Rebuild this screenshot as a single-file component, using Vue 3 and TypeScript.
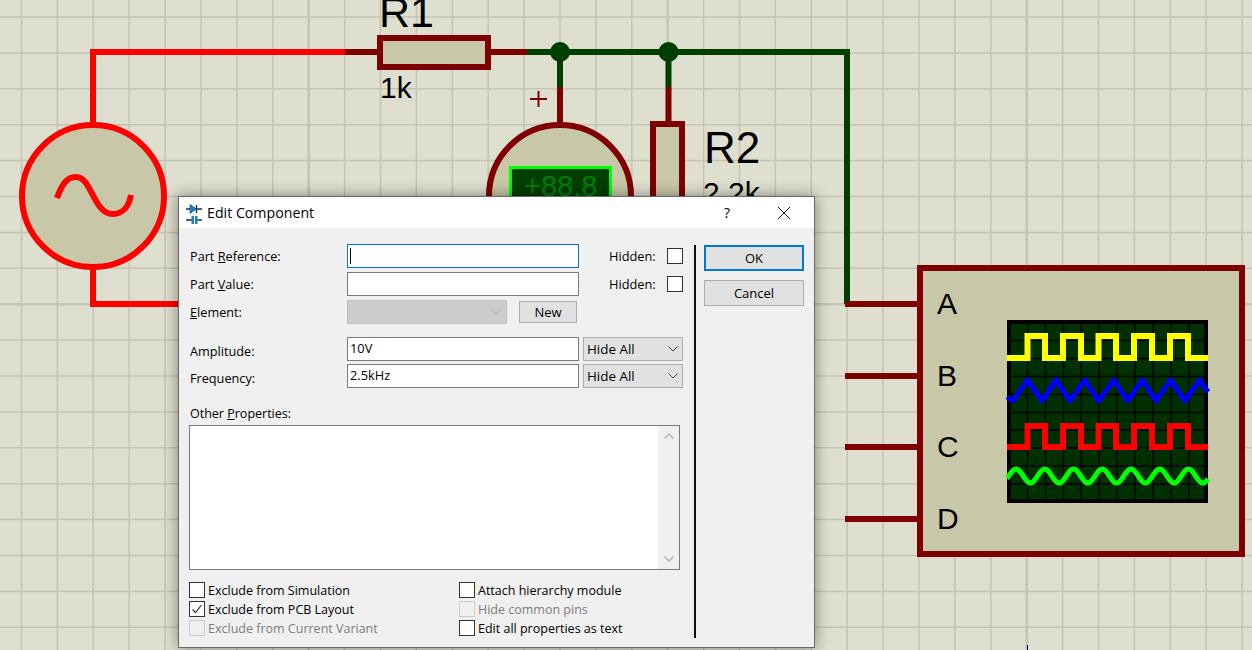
<template>
  <div class="canvas">
    <svg class="sheet" width="1252" height="650" viewBox="0 0 1252 650">
      <!-- sheet grid -->
      <g v-for="x in gridX" :key="'x' + x.pos">
        <line :x1="x.pos" y1="0" :x2="x.pos" y2="650" stroke="#c4c4b4" :stroke-width="x.major ? 2.5 : 1.5" />
      </g>
      <g v-for="y in gridY" :key="'y' + y.pos">
        <line x1="0" :y1="y.pos" x2="1252" :y2="y.pos" stroke="#c4c4b4" :stroke-width="y.major ? 2.5 : 1.5" />
      </g>

      <!-- source -->
      <circle cx="93" cy="196" r="71" fill="#c8c8a8" stroke="#ff0000" stroke-width="6" />
      <path d="M93 124V52H345M93 270V304H180" class="wire" stroke="#ff0000" />
      <path d="M57 198C62 184 67 177 76 177C92 177 93 214 113 214C123 214 129 206 131 195" class="wire" stroke="#ff0000" />

      <!-- R1 -->
      <path d="M345 52H380M490 52H527M560 87V124M668.500 87V124" class="wire" stroke="#7f0000" />
      <rect x="380" y="38" width="108" height="29" fill="#c8c8a8" stroke="#7f0000" stroke-width="6" />
      <text x="379" y="27" class="big r1">R1</text>
      <text x="380" y="98" class="mid">1k</text>

      <!-- node wires -->
      <path d="M527 52H847V304M560 52V87M668.500 52V87" class="wire" stroke="#003f00" />
      <circle cx="560" cy="52" r="10" fill="#003f00" />
      <circle cx="668.500" cy="52" r="10" fill="#003f00" />

      <!-- voltmeter -->
      <path d="M530 99H547M538.500 91V107" stroke="#7f0000" stroke-width="2" fill="none" />
      <circle cx="560" cy="196" r="71" fill="#c8c8a8" stroke="#7f0000" stroke-width="6" />
      <rect x="510.500" y="167.500" width="100" height="50" fill="#003f00" stroke="#00ff00" stroke-width="3" />
      <text x="524" y="196" class="meter">+88.8</text>

      <!-- R2 -->
      <rect x="653" y="124" width="29" height="110" fill="#c8c8a8" stroke="#7f0000" stroke-width="6" />
      <text x="704" y="163" class="big">R2</text>
      <text x="703" y="203" class="mid">2.2k</text>

      <!-- oscilloscope -->
      <path d="M845 304H919M845 376H919M845 447H919M845 519H919" class="wire" stroke="#7f0000" />
      <rect x="920" y="268" width="322" height="286" fill="#c8c8a8" stroke="#7f0000" stroke-width="6" />
      <text v-for="p in scopePins" :key="p.name" x="937" :y="p.y" class="mid">{{ p.name }}</text>
      <rect x="1009" y="322" width="197" height="179" fill="#002f00" stroke="#000" stroke-width="4" />
      <path :d="screenGrid" stroke="#000" stroke-width="1.300" fill="none" />
      <path :d="squarePath(358, 336)" class="trace" stroke="#ffff00" />
      <path :d="trianglePath" class="trace thin" stroke="#0000ff" />
      <path :d="squarePath(447, 426)" class="trace" stroke="#ff0000" />
      <path :d="sinePath" class="trace thin" stroke="#00ff00" />
      <path d="M1027.500 645V650" stroke="#00007f" stroke-width="1" />
    </svg>

    <!-- dialog window -->
    <div class="dialog">
      <header class="titlebar">
        <svg class="app-icon" width="20" height="22" viewBox="0 0 20 22">
          <path d="M2 7H18M12.500 3V11" stroke="#1c2c3c" stroke-width="1.300" fill="none" />
          <path d="M6 2.500L12.500 7L6 11.500Z" fill="#1f7fd0" stroke="#14507f" stroke-width="0.700" />
          <path d="M2 18H8M12 18H18" stroke="#1c2c3c" stroke-width="1.300" fill="none" />
          <rect x="7.500" y="14" width="2.500" height="8" fill="#1f7fd0" />
          <rect x="11" y="14" width="2.500" height="8" fill="#1f7fd0" />
        </svg>
        <span class="title">Edit Component</span>
        <span class="help">?</span>
        <svg class="close" width="14" height="14" viewBox="0 0 14 14">
          <path d="M1 1L13 13M13 1L1 13" stroke="#1a1a1a" stroke-width="1" fill="none" />
        </svg>
      </header>

      <div class="body">
        <div class="main">
          <div class="row">
            <label class="lbl">Part <u>R</u>eference:</label>
            <div class="input focused"><span class="caret"></span></div>
            <span class="hidden-lbl">Hidden:</span>
            <span class="check"></span>
          </div>
          <div class="row row-val">
            <label class="lbl">Part <u>V</u>alue:</label>
            <div class="input"></div>
            <span class="hidden-lbl">Hidden:</span>
            <span class="check"></span>
          </div>
          <div class="row row-el">
            <label class="lbl"><u>E</u>lement:</label>
            <div class="element-select">
              <svg class="chev" width="10" height="6" viewBox="0 0 10 6"><path d="M0.500 0.500L5 5L9.500 0.500" stroke="#a8a8a8" fill="none" /></svg>
            </div>
            <button class="new-btn">New</button>
          </div>

          <div v-for="(prop, i) in props" :key="prop.label" class="row prop" :class="i === 0 ? 'row-amp' : 'row-freq'">
            <label class="lbl">{{ prop.label }}:</label>
            <div class="input value">{{ prop.value }}</div>
            <div class="hide-select">
              <span>Hide All</span>
              <svg class="chev" width="10" height="6" viewBox="0 0 10 6"><path d="M0.500 0.500L5 5L9.500 0.500" stroke="#444" fill="none" /></svg>
            </div>
          </div>

          <div class="other-lbl">Other <u>P</u>roperties:</div>
          <div class="textarea">
            <div class="scrollbar">
              <svg width="10" height="6" viewBox="0 0 10 6"><path d="M0.500 5.500L5 1L9.500 5.500" stroke="#b4b4b4" stroke-width="1.500" fill="none" /></svg>
              <svg width="10" height="6" viewBox="0 0 10 6"><path d="M0.500 0.500L5 5L9.500 0.500" stroke="#b4b4b4" stroke-width="1.500" fill="none" /></svg>
            </div>
          </div>

          <div class="options">
            <div v-for="opt in options" :key="opt.label" class="opt" :class="{ disabled: opt.disabled }">
              <span class="check">
                <svg v-if="opt.checked" width="14" height="14" viewBox="0 0 14 14"><path d="M2.500 7.500L5.500 10.500L11.500 3" stroke="#333" stroke-width="1.200" fill="none" /></svg>
              </span>
              <span>{{ opt.label }}</span>
            </div>
          </div>
        </div>

        <div class="divider"></div>

        <div class="actions">
          <button class="btn default">OK</button>
          <button class="btn">Cancel</button>
        </div>
      </div>
    </div>
  </div>
</template>

<script setup lang="ts">
interface Opt {
  label: string
  checked?: boolean
  disabled?: boolean
}

const range = (n: number) => Array.from({ length: n }, (_, i) => i)

// grid pitch is a bit under 36px, every tenth line is heavier
const gridX = range(35).map((k) => ({ pos: 21.5 + 35.9 * k, major: k % 10 === 8 }))
const gridY = range(19).map((k) => ({ pos: 17 + 35.9 * k, major: k % 10 === 8 }))

const scopePins = [
  { name: 'A', y: 314 },
  { name: 'B', y: 386 },
  { name: 'C', y: 457 },
  { name: 'D', y: 529 },
]

const screenGrid = (() => {
  let d = ''
  for (const x of [1027.5, 1045.5, 1063.5, 1081, 1099, 1117, 1135, 1153, 1171, 1189]) d += `M${x} 322V501`
  for (const y of [340.5, 358.5, 376.5, 394.5, 412.5, 430, 448, 466, 484]) d += `M1009 ${y}H1206`
  return d
})()

const rises = [1027.5, 1063, 1098.5, 1134, 1170]
const falls = [1045, 1081, 1116, 1152, 1188]

const squarePath = (low: number, high: number) => {
  let d = `M1007 ${low}`
  rises.forEach((r, i) => {
    d += `H${r}V${high}H${falls[i]}V${low}`
  })
  return d + 'H1208'
}

const trianglePath = (() => {
  const peaks = [1027.5, 1056, 1085, 1114, 1142.5, 1170.5, 1199.5]
  const troughs = [1013, 1042, 1070, 1098.5, 1127.5, 1156, 1185]
  let d = 'M1007 397'
  troughs.forEach((t, i) => {
    d += `L${t} 401L${peaks[i]} 380`
  })
  return d + 'L1208 392'
})()

const sinePath = (() => {
  let d = 'M1007 478'
  for (let x = 1008; x <= 1208; x += 1) {
    const y = 476 - 7 * Math.cos(((x - 1016) / 28.75) * Math.PI * 2)
    d += `L${x} ${y.toFixed(1)}`
  }
  return d
})()

const props = [
  { label: 'Amplitude', value: '10V' },
  { label: 'Frequency', value: '2.5kHz' },
]

const options: Opt[] = [
  { label: 'Exclude from Simulation' },
  { label: 'Attach hierarchy module' },
  { label: 'Exclude from PCB Layout', checked: true },
  { label: 'Hide common pins', disabled: true },
  { label: 'Exclude from Current Variant', disabled: true },
  { label: 'Edit all properties as text' },
]
</script>

<style>
html,
body {
  margin: 0;
  overflow: hidden;
}
</style>

<style scoped>
.canvas {
  position: relative;
  width: 1252px;
  height: 650px;
  overflow: hidden;
  background: #dfdfd0;
  font-family: "Liberation Sans", Arial, sans-serif;
}

.sheet {
  display: block;
}

.wire {
  fill: none;
  stroke-width: 6;
}

.trace {
  fill: none;
  stroke-width: 6;
}

.trace.thin {
  stroke-width: 5;
  stroke-linejoin: round;
}

.big {
  font-size: 44px;
  fill: #000;
}

.big.r1 {
  font-size: 43px;
}

.mid {
  font-size: 30px;
  fill: #000;
}

.meter {
  font-size: 29px;
  fill: #007f00;
}

.dialog {
  position: absolute;
  left: 178px;
  top: 196px;
  width: 637px;
  height: 452px;
  box-sizing: border-box;
  display: flex;
  flex-direction: column;
  background: #f0f0f0;
  border: 1px solid #6a6a6a;
  box-shadow: 0 0 14px rgba(0, 0, 0, 0.45);
  font-family: "Open Sans", "Liberation Sans", sans-serif;
  font-size: 12.5px;
  color: #000;
}

.titlebar {
  flex: none;
  height: 31px;
  display: flex;
  align-items: center;
  background: #fff;
  padding-left: 5px;
}

.app-icon {
  flex: none;
  margin-right: 3px;
}

.title {
  font-size: 14.2px;
  flex: 1;
}

.help {
  font-size: 14px;
  margin-right: 47px;
}

.close {
  margin-right: 23px;
}

.body {
  flex: 1;
  display: flex;
  min-height: 0;
}

.main {
  flex: none;
  width: 515px;
  padding: 16px 0 0 10px;
  box-sizing: border-box;
}

.row {
  display: flex;
  align-items: center;
  height: 24px;
}

.row-val {
  margin-top: 4px;
}

.row-el {
  margin-top: 4px;
}

.row-amp {
  margin-top: 13px;
}

.row-freq {
  margin-top: 3px;
}

.lbl {
  width: 158px;
  flex: none;
  padding-left: 1px;
  box-sizing: border-box;
  font-size: 12.7px;
}

.prop .lbl {
  padding-top: 3px;
}

.input {
  width: 232px;
  height: 24px;
  flex: none;
  box-sizing: border-box;
  background: #fff;
  border: 1px solid #7a7a7a;
  display: flex;
  align-items: center;
  padding-left: 2px;
}

.input.value {
  font-size: 12.8px;
  padding-bottom: 3px;
}

.input.focused {
  border-color: #0078d7;
}

.caret {
  width: 1px;
  height: 16px;
  background: #000;
}

.hidden-lbl {
  margin-left: 30px;
  width: 58px;
  flex: none;
  font-size: 12.8px;
}

.check {
  flex: none;
  width: 16px;
  height: 16px;
  box-sizing: border-box;
  background: #fff;
  border: 1px solid #333;
  display: flex;
  align-items: center;
  justify-content: center;
}

.element-select {
  flex: none;
  width: 160px;
  height: 24px;
  box-sizing: border-box;
  background: #cccccc;
  border: 1px solid #bfbfbf;
  display: flex;
  align-items: center;
  justify-content: flex-end;
  padding-right: 5px;
}

.new-btn {
  margin-left: 12px;
  width: 58px;
  height: 22px;
  box-sizing: border-box;
  background: #e1e1e1;
  border: 1px solid #adadad;
  font: inherit;
  font-size: 13px;
  color: inherit;
  padding: 0;
}

.hide-select {
  flex: none;
  margin-left: 4px;
  width: 100px;
  height: 24px;
  box-sizing: border-box;
  background: #e1e1e1;
  border: 1px solid #adadad;
  display: flex;
  align-items: center;
  justify-content: space-between;
  padding: 0 4px 0 3px;
  font-size: 13.4px;
}

.other-lbl {
  margin-top: 17px;
  height: 20px;
  line-height: 18px;
  padding-left: 1px;
}

.textarea {
  width: 491px;
  height: 145px;
  box-sizing: border-box;
  background: #fff;
  border: 1px solid #7a7a7a;
  display: flex;
  justify-content: flex-end;
}

.scrollbar {
  width: 21px;
  background: #f0f0f0;
  display: flex;
  flex-direction: column;
  align-items: center;
  justify-content: space-between;
  padding: 7px 0;
  box-sizing: border-box;
}

.options {
  margin-top: 12px;
  display: grid;
  grid-template-columns: 270px 1fr;
  row-gap: 3px;
}

.opt {
  display: flex;
  align-items: center;
  gap: 3px;
  height: 16px;
  white-space: nowrap;
}

.opt.disabled {
  color: #7d7d7d;
}

.opt.disabled .check {
  background: transparent;
  border-color: #ccc;
}

.divider {
  flex: none;
  width: 2px;
  margin-top: 17px;
  margin-bottom: 9px;
  background: #111;
}

.actions {
  flex: 1;
  padding: 17px 10px 0 8px;
  display: flex;
  flex-direction: column;
  gap: 9px;
}

.btn {
  height: 26px;
  flex: none;
  box-sizing: border-box;
  background: #e1e1e1;
  border: 1px solid #adadad;
  font: inherit;
  font-size: 13px;
  color: inherit;
  padding: 0;
}

.btn.default {
  border: 2px solid #0078d7;
}
</style>
